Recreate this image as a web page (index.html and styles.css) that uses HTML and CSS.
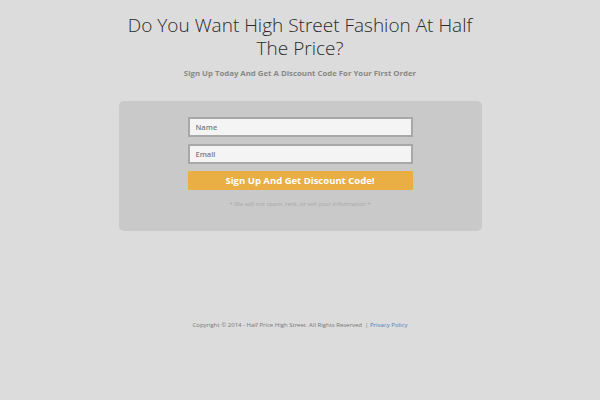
FILE: index.html
```html
<!DOCTYPE html>
<html>
<head>
<meta charset="utf-8">
<link rel="stylesheet" href="styles.css">
</head>
<body>
<div class="page">
  <h1 class="title">Do You Want High Street Fashion At Half<br>The Price?</h1>
  <p class="subtitle">Sign Up Today And Get A Discount Code For Your First Order</p>
  <div class="panel">
    <form class="form">
      <input class="field" type="text" placeholder="Name">
      <input class="field" type="text" placeholder="Email">
      <button class="submit" type="button">Sign Up And Get Discount Code!</button>
    </form>
    <p class="note">* We will not spam, rent, or sell your information *</p>
  </div>
  <div class="footer">Copyright © 2014 - Half Price High Street. All Rights Reserved &nbsp;| <a class="link" href="#">Privacy Policy</a></div>
</div>
</body>
</html>
```
FILE: styles.css
```css
html, body {
  margin: 0;
  padding: 0;
  background: #dcdcdc;
  font-family: "Open Sans", "Liberation Sans", sans-serif;
}
.page {
  width: 600px;
  height: 400px;
  display: flex;
  flex-direction: column;
  align-items: center;
  padding-top: 13.5px;
  box-sizing: border-box;
}
.title {
  margin: 0;
  font-size: 19px;
  line-height: 23px;
  font-weight: 300;
  color: #2a2a2a;
  text-align: center;
}
.subtitle {
  margin: 8px 0 0;
  font-size: 7.8px;
  line-height: 11px;
  font-weight: 700;
  color: #888;
}
.panel {
  margin-top: 22px;
  width: 363px;
  height: 130px;
  background: #c9c9c9;
  border-radius: 5px;
  display: flex;
  flex-direction: column;
  align-items: center;
  padding-top: 16px;
  box-sizing: border-box;
}
.form {
  display: flex;
  flex-direction: column;
  gap: 7px;
  width: 225px;
}
.field {
  box-sizing: border-box;
  height: 20px;
  width: 100%;
  margin: 0;
  border: 2px solid #a8a8a8;
  background: #f4f4f4;
  padding: 0 6px;
  font-family: "Open Sans", sans-serif;
  font-size: 7.5px;
  font-weight: 600;
  color: #777;
  outline: none;
}
.field::placeholder { color: #7c7c7c; }
.submit {
  height: 19px;
  border: none;
  margin: 0;
  background: #e9ae44;
  border-radius: 1px;
  color: #fff;
  font-family: "Open Sans", sans-serif;
  font-size: 9.5px;
  font-weight: 700;
  padding: 0;
}
.note {
  margin: 10px 0 0;
  font-size: 6px;
  color: #a8a8a8;
}
.footer {
  margin-top: 90px;
  font-size: 6px;
  color: #777;
}
.link {
  color: #4a7cc0;
  text-decoration: none;
}
```
